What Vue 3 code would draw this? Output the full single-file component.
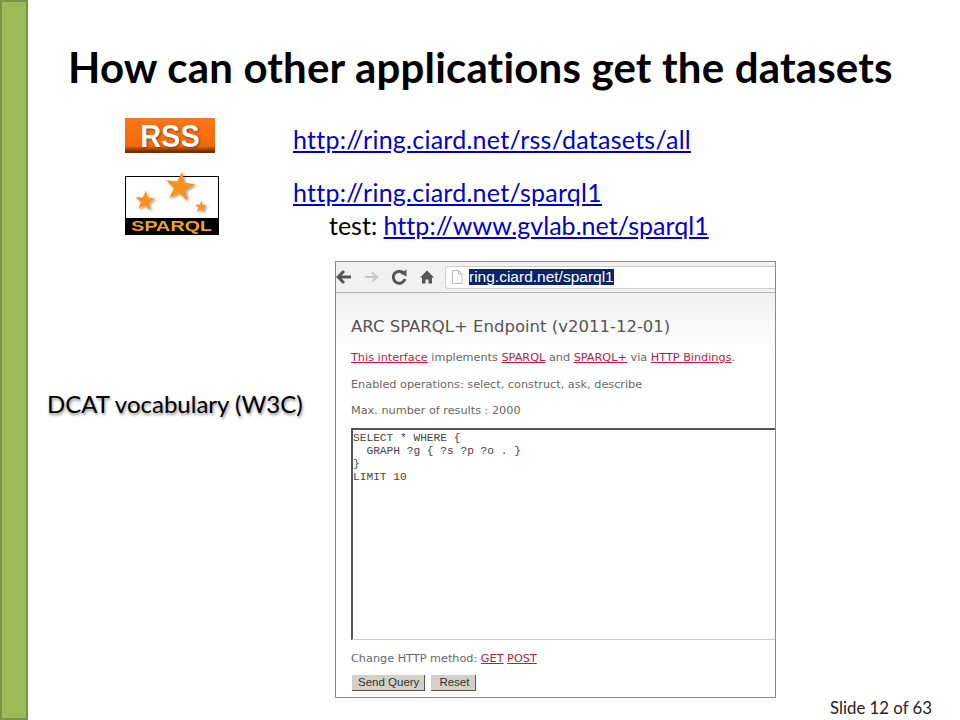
<template>
  <div class="slide">
    <div class="bar"></div>
    <div class="main">
      <h1 class="title">How can other applications get the datasets</h1>
      <div class="row rss-row">
        <div class="rss"><span>RSS</span></div>
        <a class="link" href="#">http://ring.ciard.net/rss/datasets/all</a>
      </div>
      <div class="row sparql-row">
        <div class="sparql">
          <svg class="stars" width="92" height="42" viewBox="0 0 92 42">
            <defs>
              <filter id="sh" x="-30%" y="-30%" width="170%" height="170%">
                <feDropShadow dx="1.5" dy="1.5" stdDeviation="1" flood-color="#000" flood-opacity=".4" />
              </filter>
            </defs>
            <g fill="#f7941d" filter="url(#sh)">
              <path v-for="s in stars" :key="s.cx" :d="starPath(s)" />
            </g>
          </svg>
          <div class="sparql-label"><span>SPARQL</span></div>
        </div>
        <div class="links">
          <a class="link" href="#">http://ring.ciard.net/sparql1</a>
          <div class="test">test: <a class="link" href="#">http://www.gvlab.net/sparql1</a></div>
        </div>
      </div>
      <div class="lower">
        <div class="dcat">DCAT vocabulary (W3C)</div>
        <div class="shot">
          <div class="toolbar">
            <svg class="nav" width="106" height="20" viewBox="0 0 106 20">
              <path d="M15 10H3M8 4L2 10 8 16" fill="none" stroke="#555" stroke-width="3" />
              <path d="M29 10H41M36 5.500L41 10 36 14.500" fill="none" stroke="#c8c8c8" stroke-width="2.200" />
              <path d="M68 6.500A6 6 0 1 0 69 12" fill="none" stroke="#555" stroke-width="3" />
              <path d="M64.500 6.500L70.500 2.500V9.500z" fill="#555" />
              <path d="M84 10.500L91 3.500L98 10.500H96V16.500H92.500V12.500H89.500V16.500H86V10.500z" fill="#555" />
            </svg>
            <div class="url">
              <svg width="12" height="14" viewBox="0 0 12 14"><path d="M1.500 .5H7.500L11 4V13.500H1.500zM7.500 .5V4H11" fill="#fff" stroke="#bbb" /></svg>
              <span class="sel">ring.ciard.net/sparql1</span>
            </div>
          </div>
          <div class="page">
            <div class="h">ARC SPARQL+ Endpoint (v2011-12-01)</div>
            <p class="p first"><a>This interface</a> implements <a>SPARQL</a> and <a>SPARQL+</a> via <a>HTTP Bindings</a>.</p>
            <p class="p ops">Enabled operations: select, construct, ask, describe</p>
            <p class="p max">Max. number of results : 2000</p>
            <pre class="query">SELECT * WHERE {
  GRAPH ?g { ?s ?p ?o . }
}
LIMIT 10</pre>
            <p class="p method">Change HTTP method: <a>GET</a> <a>POST</a></p>
            <div class="btns">
              <span class="btn">Send Query</span>
              <span class="btn reset">Reset</span>
            </div>
          </div>
        </div>
      </div>
      <div class="foot">Slide 12 of 63</div>
    </div>
  </div>
</template>

<script setup>
const stars = [
  { cx: 54, cy: 10, R: 15.5, r: 6.2, rot: 8 },
  { cx: 19, cy: 24, R: 10.5, r: 4.2, rot: 5 },
  { cx: 75, cy: 30, R: 6.5, r: 2.6, rot: 5 },
]
function starPath({ cx, cy, R, r, rot }) {
  const pts = []
  for (let i = 0; i < 10; i++) {
    const rad = i % 2 ? r : R
    const a = ((rot + i * 36 - 90) * Math.PI) / 180
    pts.push(`${(cx + rad * Math.cos(a)).toFixed(1)} ${(cy + rad * Math.sin(a)).toFixed(1)}`)
  }
  return 'M' + pts.join('L') + 'z'
}
</script>

<style>
html, body { margin: 0; background: #fff; }
</style>

<style scoped>
.slide {
  width: 960px;
  height: 720px;
  display: flex;
  overflow: hidden;
  background: #fff;
  font-family: Lato, "Liberation Sans", sans-serif;
  font-variant-ligatures: none;
  color: #000;
}
.bar {
  width: 28px;
  flex: none;
  box-sizing: border-box;
  background: #9bbb59;
  border: 2px solid #7a9146;
}
.main {
  flex: 1;
  display: flex;
  flex-direction: column;
  min-width: 0;
}
.title {
  margin: 42px 0 0 40px;
  font-size: 42px;
  letter-spacing: .18px;
  line-height: 50px;
  font-weight: 700;
  white-space: nowrap;
}
.row {
  display: flex;
  margin-left: 97px;
}
.rss-row { margin-top: 26px; height: 58px; }
.rss {
  width: 90px;
  height: 35px;
  box-sizing: border-box;
  background: linear-gradient(#f9761c, #f46a0a 85%, #7a3204);
  display: flex;
  align-items: center;
  justify-content: center;
  border-bottom: 2px solid #6b3005;
}
.rss span {
  font: 700 29px/1 "Liberation Sans", sans-serif;
  color: #fff;
  text-shadow: 1px 1px 2px #8a3a05;
  margin-top: 3px;
  transform: scaleY(1.08);
}
.link {
  color: #0000d0;
  text-decoration: underline;
  font-size: 25px;
  letter-spacing: .25px;
  line-height: 36px;
  margin-left: 78px;
  white-space: nowrap;
}
.rss-row .link { margin-top: 3px; }
.sparql {
  width: 94px;
  height: 59px;
  box-sizing: border-box;
  border: 1px solid #000;
  position: relative;
  display: flex;
  flex-direction: column;
  justify-content: flex-end;
}
.stars { position: absolute; left: 0; top: 0; overflow: visible; }
.sparql-label {
  background: #000;
  color: #f9a01b;
  font: 700 15px/16px "Liberation Sans", sans-serif;
  text-align: center;
  height: 16px;
}
.sparql-label span {
  display: inline-block;
  transform: scaleX(1.32);
}
.links {
  display: flex;
  flex-direction: column;
  align-items: flex-start;
}
.sparql-row .links { margin-left: -4px; margin-top: -1px; }
.links > .link { line-height: 34px; margin-left: 78px; }
.test {
  margin-left: 114px;
  font-size: 25px;
  line-height: 32px;
  white-space: nowrap;
}
.test .link { margin-left: 0; letter-spacing: .04px; line-height: 1; }
.lower {
  display: flex;
  margin-top: 20px;
}
.dcat {
  width: 307px;
  box-sizing: border-box;
  margin-top: 125px;
  padding-left: 19px;
  font-size: 24px;
  line-height: 36px;
  white-space: nowrap;
  text-shadow: 1px 2px 3px rgba(0,0,0,.45);
}
.shot {
  width: 441px;
  height: 437px;
  box-sizing: border-box;
  border: 1px solid #8a8a8a;
  background: #fff;
  font-family: "DejaVu Sans", sans-serif;
  overflow: hidden;
  flex: none;
}
.toolbar {
  height: 31px;
  box-sizing: border-box;
  background: #f1f1f1;
  border-bottom: 1px solid #b5b5b5;
  display: flex;
  align-items: center;
}
.nav { flex: none; }
.url {
  flex: 1;
  margin-left: 3px;
  height: 23px;
  box-sizing: border-box;
  background: #fff;
  border: 1px solid #ccc;
  border-right: 0;
  border-radius: 3px 0 0 3px;
  display: flex;
  align-items: center;
  padding-left: 5px;
  gap: 6px;
}
.sel {
  background: #0a246a;
  color: #fff;
  font: 15.500px/16px "Liberation Sans", sans-serif;
}
.page {
  background: linear-gradient(#f0f0f0, #fff 60px);
  padding: 21px 0 0 15px;
  height: 405px;
  box-sizing: border-box;
}
.h {
  font-size: 16.500px;
  line-height: 26px;
  color: #555;
  white-space: nowrap;
}
.p {
  margin: 0;
  font-size: 11.250px;
  line-height: 14px;
  white-space: nowrap;
  color: #666;
}
.p a { color: #c0183a; text-decoration: underline; }
.p.first { margin-top: 11px; }
.p.ops { margin-top: 13px; }
.p.max { margin-top: 12px; }
.query {
  margin: 10px 0 0 0;
  height: 212px;
  box-sizing: border-box;
  border-top: 2px solid #555;
  border-left: 2px solid #555;
  border-bottom: 1px solid #ccc;
  padding: 2px 0 0 0;
  font: 11.200px/13px "Liberation Mono", monospace;
  color: #444;
}
.p.method { margin-top: 12px; }
.btns { display: flex; gap: 6px; margin-top: 9px; margin-left: 1px; }
.btn {
  background: #d4d0c8;
  border-right: 1px solid #555;
  border-bottom: 1px solid #555;
  height: 15px;
  padding: 0 5px 0 6px;
  font: 11.500px/15px "Liberation Sans", sans-serif;
  color: #333;
}
.btn.reset { padding: 0 6px 0 8px; }
.foot {
  align-self: flex-end;
  margin-right: 28px;
  font-size: 16.800px;
  line-height: 20px;
  color: #222;
}
</style>
